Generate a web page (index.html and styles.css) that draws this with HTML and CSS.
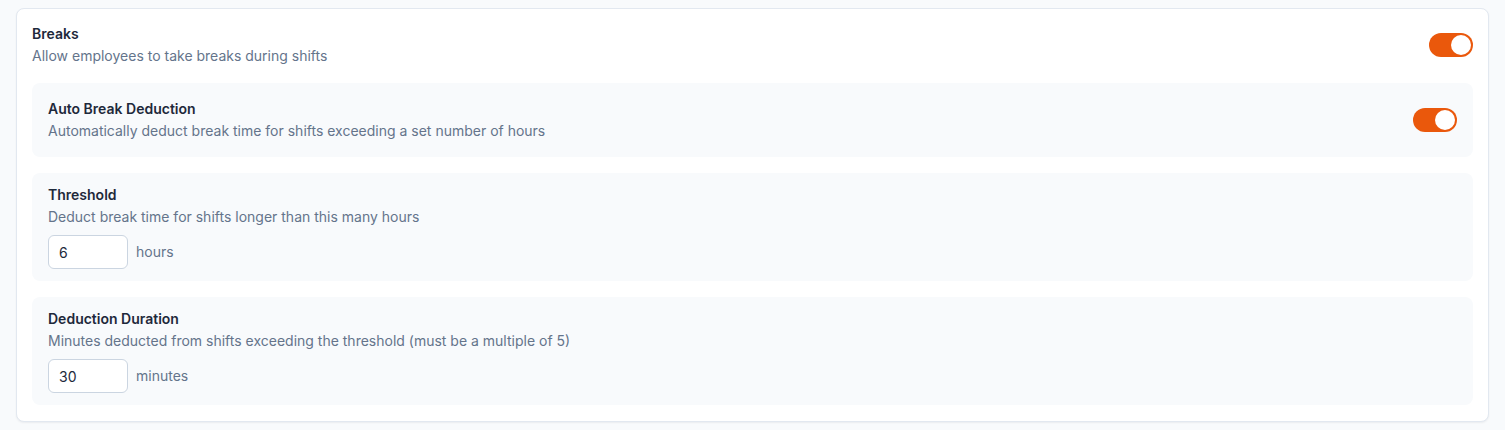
FILE: index.html
```html
<!DOCTYPE html>
<html lang="en">
<head>
    <meta charset="UTF-8">
    <meta name="viewport" content="width=device-width, initial-scale=1.0">
    <title>Break Settings</title>
    <link rel="stylesheet" href="styles.css">
</head>
<body>
    <div class="card">
        <div class="row">
            <div>
                <div class="title">Breaks</div>
                <div class="desc">Allow employees to take breaks during shifts</div>
            </div>
            <span class="toggle on"><span class="knob"></span></span>
        </div>

        <div class="panel panel-toggle">
            <div>
                <div class="title">Auto Break Deduction</div>
                <div class="desc">Automatically deduct break time for shifts exceeding a set number of hours</div>
            </div>
            <span class="toggle on"><span class="knob"></span></span>
        </div>

        <div class="panel">
            <div class="title">Threshold</div>
            <div class="desc">Deduct break time for shifts longer than this many hours</div>
            <div class="field">
                <input type="text" value="6">
                <span class="unit">hours</span>
            </div>
        </div>

        <div class="panel">
            <div class="title">Deduction Duration</div>
            <div class="desc">Minutes deducted from shifts exceeding the threshold (must be a multiple of 5)</div>
            <div class="field">
                <input type="text" value="30">
                <span class="unit">minutes</span>
            </div>
        </div>
    </div>
</body>
</html>
```

FILE: styles.css
```css
body {
    margin: 0;
    padding: 8px 16px;
    background: #f8fafc;
    font-family: Inter, "Noto Sans", sans-serif;
    font-size: 14px;
    line-height: 20px;
    color: #1e293b;
}
.card {
    background: #fff;
    border: 1px solid #e2e8f0;
    border-radius: 8px;
    box-shadow: 0 1px 2px rgba(15, 23, 42, 0.06);
    padding: 15px 15px 16px;
    display: flex;
    flex-direction: column;
    gap: 16px;
}
.row {
    display: flex;
    justify-content: space-between;
    align-items: center;
    padding-bottom: 1px;
}
.title {
    font-weight: 600;
    color: #1e293b;
}
.desc {
    margin-top: 2px;
    color: #64748b;
}
.panel {
    background: #f8fafc;
    border-radius: 8px;
    padding: 12px 16px;
}
.panel-toggle {
    padding: 16px;
    display: flex;
    justify-content: space-between;
    align-items: center;
}
.toggle {
    width: 44px;
    height: 24px;
    border-radius: 12px;
    background: #cbd5e1;
    display: flex;
    align-items: center;
    padding: 2px;
    box-sizing: border-box;
    flex-shrink: 0;
}
.toggle.on {
    background: #ea580c;
    justify-content: flex-end;
}
.knob {
    width: 20px;
    height: 20px;
    border-radius: 50%;
    background: #fff;
}
.field {
    margin-top: 8px;
    display: flex;
    align-items: center;
    gap: 8px;
}
.field input {
    width: 80px;
    height: 34px;
    box-sizing: border-box;
    border: 1px solid #cbd5e1;
    border-radius: 6px;
    background: #fff;
    padding: 0 10px;
    font-family: inherit;
    font-size: 14px;
    color: #1e293b;
}
.unit {
    color: #64748b;
}
```
